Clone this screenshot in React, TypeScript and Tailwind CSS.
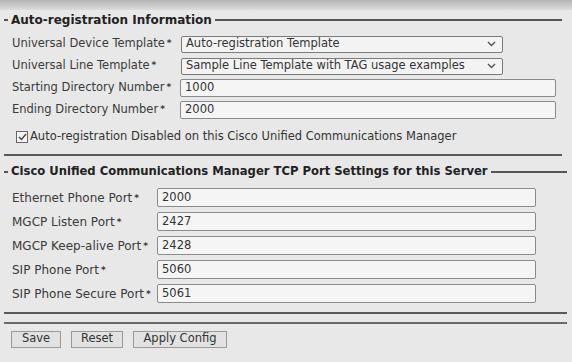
import React from 'react';

const font = { fontFamily: '"DejaVu Sans", Verdana, sans-serif' };

function Legend({ title, lineEnd, size }: { title: string; lineEnd: string; size: string }) {
  return (
    <div className={`flex items-center ${lineEnd}`}>
      <div className="w-[4px] h-[2px] bg-[#555]" />
      <span className={`px-[3px] ${size} font-bold text-[#222] leading-none`}>{title}</span>
      <div className="flex-1 h-[2px] bg-[#555]" />
    </div>
  );
}

function Label({ text, width, size = 'text-[11.5px]' }: { text: string; width: string; size?: string }) {
  return (
    <div className={`${width} ${size} shrink-0 text-[#3a3a3a] leading-none`}>
      {text}
      <sup className="text-[9px] font-bold ml-[2px] relative top-[-1px]">*</sup>
    </div>
  );
}

function Select({ value }: { value: string }) {
  return (
    <div className="w-[322px] h-[17px] border border-[#7a7a7a] rounded-[2px] bg-[#f3f3f3] flex items-center justify-between pl-[4px] pr-[6px]">
      <span className="text-[11.5px] text-[#333] leading-none">{value}</span>
      <svg width="9" height="6" viewBox="0 0 9 6" className="text-[#555]">
        <path d="M1 1l3.5 3.5L8 1" fill="none" stroke="currentColor" strokeWidth="1.4" />
      </svg>
    </div>
  );
}

function TextInput({ value, width, height }: { value: string; width: string; height: string }) {
  return (
    <div className={`${width} ${height} border border-[#8a8a8a] rounded-[2px] bg-[#f5f5f5] flex items-center pl-[4px]`}>
      <span className="text-[11.5px] text-[#333] leading-none">{value}</span>
    </div>
  );
}

export default function App() {
  const ports = [
    ['Ethernet Phone Port', '2000'],
    ['MGCP Listen Port', '2427'],
    ['MGCP Keep-alive Port', '2428'],
    ['SIP Phone Port', '5060'],
    ['SIP Phone Secure Port', '5061'],
  ];

  return (
    <div style={font} className="w-[572px] h-[362px] bg-[#e8e8e8] overflow-hidden flex flex-col">
      <div className="h-[10px] bg-gradient-to-b from-[#b5b5b5] to-[#dcdcdc]" />

      <div className="pl-[4px] pt-[4px]">
        <Legend title="Auto-registration Information" lineEnd="mr-[10px]" size="text-[12px]" />
        <div className="flex flex-col pl-[8px] pt-[7px]">
          <div className="flex items-center h-[22px]">
            <Label text="Universal Device Template" width="w-[169px]" />
            <Select value="Auto-registration Template" />
          </div>
          <div className="flex items-center h-[22px]">
            <Label text="Universal Line Template" width="w-[169px]" />
            <Select value="Sample Line Template with TAG usage examples" />
          </div>
          <div className="flex items-center h-[22px]">
            <Label text="Starting Directory Number" width="w-[168px]" />
            <TextInput value="1000" width="w-[376px]" height="h-[18px]" />
          </div>
          <div className="flex items-center h-[22px]">
            <Label text="Ending Directory Number" width="w-[168px]" />
            <TextInput value="2000" width="w-[376px]" height="h-[18px]" />
          </div>
        </div>
        <div className="flex items-center pl-[12px] pt-[10px]">
          <div className="w-[12px] h-[12px] border border-[#666] bg-[#f3f3f3] flex items-center justify-center">
            <svg width="9" height="8" viewBox="0 0 9 8">
              <path d="M1 4l2.5 2.5L8 1" fill="none" stroke="#444" strokeWidth="1.4" />
            </svg>
          </div>
          <span className="ml-[2px] text-[11.5px] text-[#333] leading-none">
            Auto-registration Disabled on this Cisco Unified Communications Manager
          </span>
        </div>
        <div className="mt-[11px] mr-[10px] h-[2px] bg-[#5a5a5a]" />
      </div>

      <div className="pl-[4px] pt-[10px]">
        <Legend
          title="Cisco Unified Communications Manager TCP Port Settings for this Server"
          lineEnd="mr-[5px]"
          size="text-[11.6px]"
        />
        <div className="flex flex-col pl-[8px] pt-[8px]">
          {ports.map(([label, value]) => (
            <div key={label} className="flex items-center h-[24px]">
              <Label text={label} width="w-[145px]" size="text-[12px]" />
              <TextInput value={value} width="w-[379px]" height="h-[19px]" />
            </div>
          ))}
        </div>
        <div className="mt-[6px] mr-[5px] h-[2px] bg-[#5a5a5a]" />
        <div className="mt-[8px] mr-[5px] h-[2px] bg-[#6a6a6a]" />
      </div>

      <div className="flex gap-[10px] pl-[11px] pt-[7px]">
        <button className="w-[50px] h-[17px] border border-[#9a9a9a] bg-[#e2e2e2] text-[11.5px] text-[#333] leading-none">Save</button>
        <button className="w-[52px] h-[17px] border border-[#9a9a9a] bg-[#e2e2e2] text-[11.5px] text-[#333] leading-none">Reset</button>
        <button className="w-[94px] h-[17px] border border-[#9a9a9a] bg-[#e2e2e2] text-[11.5px] text-[#333] leading-none">Apply Config</button>
      </div>
    </div>
  );
}
